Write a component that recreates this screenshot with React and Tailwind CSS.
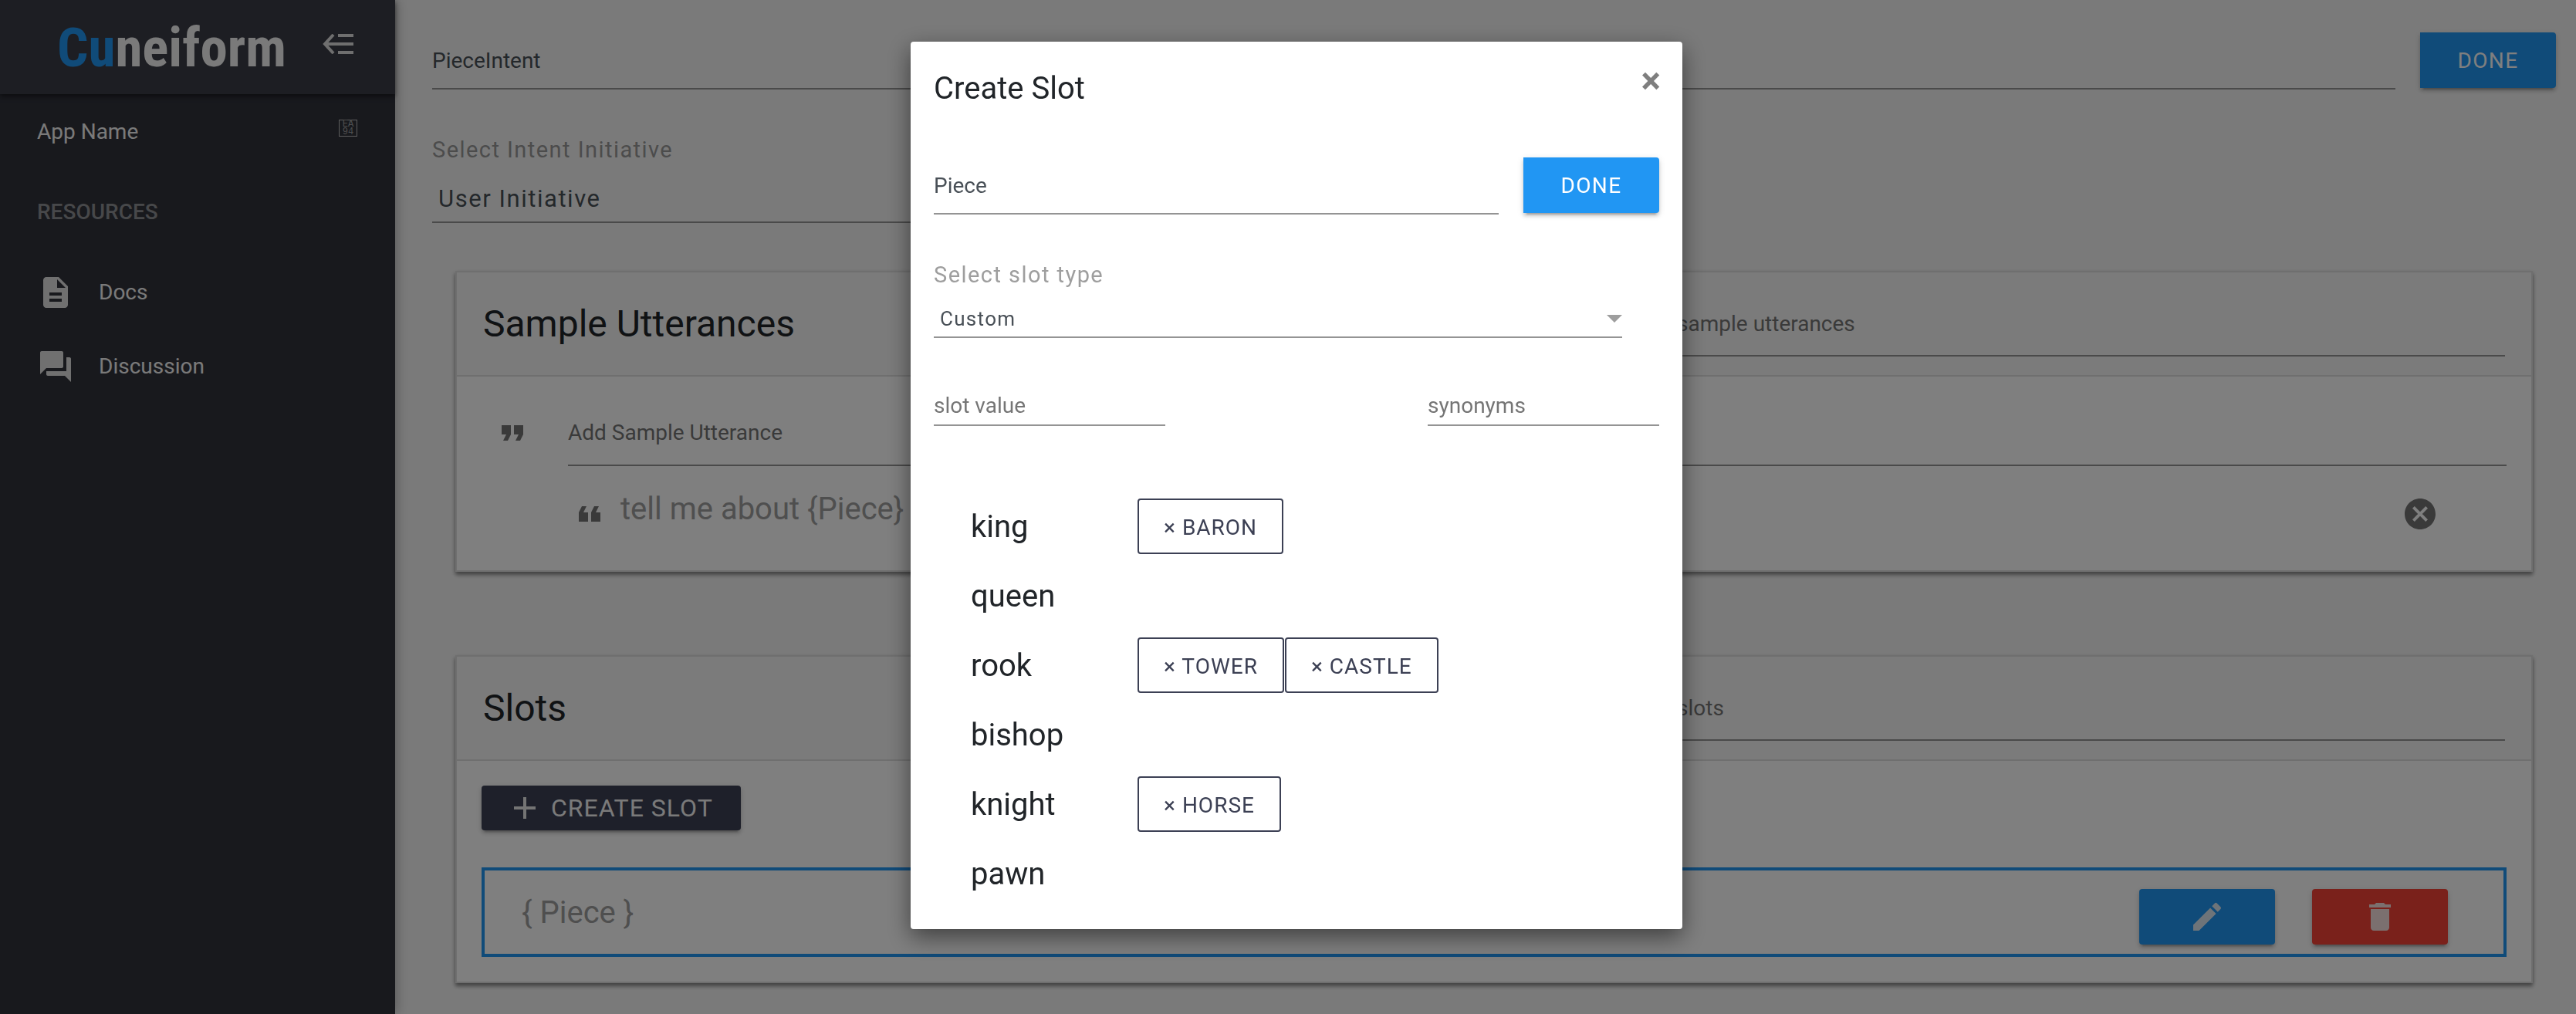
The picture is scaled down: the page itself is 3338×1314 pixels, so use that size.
import React from "react";
import {
  MdAdd,
  MdCancel,
  MdDelete,
  MdDescription,
  MdEdit,
  MdFormatQuote,
  MdQuestionAnswer,
} from "react-icons/md";

const raised =
  "shadow-[0_6px_2px_-4px_rgba(0,0,0,0.2),0_4px_4px_rgba(0,0,0,0.14),0_2px_10px_rgba(0,0,0,0.12)]";
const line = "border-b-2 border-[#949494] bg-transparent outline-none";

const slotValues = [
  { value: "king", synonyms: ["baron"] },
  { value: "queen", synonyms: [] },
  { value: "rook", synonyms: ["tower", "castle"] },
  { value: "bishop", synonyms: [] },
  { value: "knight", synonyms: ["horse"] },
  { value: "pawn", synonyms: [] },
];

function DoneButton() {
  return (
    <button
      type="button"
      className={`h-[72px] w-44 shrink-0 rounded-r bg-[#2196f3] pt-0.5 text-[28px] tracking-wider text-white ${raised}`}
    >
      DONE
    </button>
  );
}

function Sidebar() {
  return (
    <aside className="z-10 w-[512px] shrink-0 bg-[#30323b] text-[28px] text-[#f5f5f5] shadow-[0_0_16px_rgba(0,0,0,0.35)]">
      <header className="flex h-[122px] items-center justify-between bg-[#3b3d46] pr-[54px] pl-[74px] shadow-[0_3px_6px_rgba(0,0,0,0.5)]">
        <h1 className="font-['Roboto_Condensed','Roboto',sans-serif] text-[71px] leading-none font-bold">
          <span className="text-[#2196f3]">Cu</span>neiform
        </h1>
        <button type="button" aria-label="Collapse menu" className="pb-2">
          <svg width="40" height="26" viewBox="0 0 40 26" fill="none" stroke="#dedede" strokeWidth="4">
            <path d="M20 2H40M4 13H40M20 24H40M14 1L3 13L14 25" />
          </svg>
        </button>
      </header>
      <div className="mt-[29px] flex items-start justify-between pr-[49px] pl-12 leading-10">
        <span>App Name</span>
        <span
          aria-hidden="true"
          className="mt-1 flex w-6 flex-col items-center border border-[#bdbdbd] font-['Liberation_Mono',monospace] text-[12px] leading-[10px] text-[#9e9e9e]"
        >
          <span>EA</span>
          <span>94</span>
        </span>
      </div>
      <h2 className="mt-16 pl-12 leading-10 font-medium text-[#8f9094]">RESOURCES</h2>
      <nav className="mt-[60px] flex flex-col gap-12 pl-12">
        <a href="#docs" className="flex h-12 items-center gap-8">
          <MdDescription size={48} color="#e0e0e0" />
          Docs
        </a>
        <a href="#discussion" className="flex h-12 items-center gap-8">
          <MdQuestionAnswer size={48} color="#e0e0e0" />
          Discussion
        </a>
      </nav>
    </aside>
  );
}

function Card({ title, placeholder, children }) {
  return (
    <section className="mx-[30px] border-2 border-[#dfdfdf] bg-white shadow-[0_4px_5px_rgba(0,0,0,0.4),0_2px_6px_rgba(0,0,0,0.12)]">
      <header className="flex h-[135px] items-center justify-between border-b-2 border-[#dfdfdf] bg-[#f7f7f7] px-[34px]">
        <h2 className="text-[48px] text-[#212529]">{title}</h2>
        <input
          type="text"
          aria-label={placeholder}
          placeholder={placeholder}
          className={`h-[84px] w-[44.5%] pt-0.5 text-[28px] placeholder:text-[#757575] ${line}`}
        />
      </header>
      <div className="px-8">{children}</div>
    </section>
  );
}

function Intent() {
  return (
    <main className="min-w-0 grow pt-[42px] pr-[26px] pl-12">
      <div className="flex items-start gap-8">
        <input
          type="text"
          aria-label="Intent name"
          defaultValue="PieceIntent"
          className={`h-[74px] grow text-[28px] text-[#495057] ${line}`}
        />
        <DoneButton />
      </div>
      <div className="mt-[58px] mb-[62px] w-[45%]">
        <label htmlFor="initiative" className="block text-[29px] leading-10 tracking-wider text-[#999999]">
          Select Intent Initiative
        </label>
        <select
          id="initiative"
          className={`mt-[13px] block h-[62px] w-full appearance-none pt-0.5 pl-2 text-[31px] tracking-wider text-[#495057] ${line}`}
        >
          <option>User Initiative</option>
        </select>
      </div>

      <Card title="Sample Utterances" placeholder="Search sample utterances">
        <div className="flex items-center gap-12 pt-[30px] pl-4">
          <MdFormatQuote size={48} color="#757575" />
          <input
            type="text"
            aria-label="Add Sample Utterance"
            placeholder="Add Sample Utterance"
            className={`h-[86px] grow text-[28px] placeholder:text-[#757575] ${line}`}
          />
        </div>
        <div className="mt-[26px] flex items-end gap-4 pr-[88px] pb-[49px] pl-[116px]">
          <MdFormatQuote size={48} color="#757575" className="rotate-180" />
          <p className="grow text-[40px] leading-[60px] text-[#9e9e9e]">{"tell me about {Piece}"}</p>
          <button type="button" aria-label="Remove utterance">
            <MdCancel size={48} color="#757575" />
          </button>
        </div>
      </Card>

      <div className="h-[108px]" />

      <Card title="Slots" placeholder="Search slots">
        <div className="py-8">
          <button
            type="button"
            className={`flex h-[58px] items-center gap-[10px] rounded bg-[#3c4054] pr-9 pl-8 text-[32px] tracking-[1px] text-[#f5f5f5] ${raised}`}
          >
            <MdAdd size={48} color="#e8e8e8" />
            CREATE SLOT
          </button>
          <div className="mt-12 flex h-[116px] items-center justify-between border-4 border-[#2196f3] pr-[72px] pl-12">
            <p className="pt-0.5 text-[40px] text-[#9e9e9e]">{"{ Piece }"}</p>
            <div className="mt-3 flex gap-12">
              <button
                type="button"
                aria-label="Edit slot"
                className={`flex h-[72px] w-44 items-center justify-center rounded bg-[#2196f3] ${raised}`}
              >
                <MdEdit size={48} color="#dde9f2" />
              </button>
              <button
                type="button"
                aria-label="Delete slot"
                className={`flex h-[72px] w-44 items-center justify-center rounded bg-[#f44336] ${raised}`}
              >
                <MdDelete size={48} color="#f7e0de" />
              </button>
            </div>
          </div>
        </div>
      </Card>
    </main>
  );
}

function CreateSlotDialog() {
  return (
    <div className="fixed inset-0 z-20 flex items-start justify-center overflow-auto bg-black/50 pt-[54px] pl-[22px]">
      <div
        role="dialog"
        aria-modal="true"
        aria-labelledby="dialog-title"
        className="w-[1000px] rounded bg-white px-[30px] pt-[37px] pb-9 shadow-[0_10px_30px_rgba(0,0,0,0.5)]"
      >
        <div className="flex items-start justify-between">
          <h2 id="dialog-title" className="text-[40px] leading-[48px] text-[#212529]">
            Create Slot
          </h2>
          <button type="button" aria-label="Close" className="-mr-0.5 text-[48px] leading-[28px] font-bold text-[#7f7f7f]">
            ×
          </button>
        </div>
        <div className="mt-[65px] flex items-start gap-8">
          <input
            type="text"
            aria-label="Slot name"
            defaultValue="Piece"
            className={`h-[74px] grow text-[28px] text-[#495057] ${line}`}
          />
          <DoneButton />
        </div>
        <div className="mt-[58px] mr-12">
          <label htmlFor="slot-type" className="block text-[29px] leading-10 tracking-wider text-[#9e9e9e]">
            Select slot type
          </label>
          <div className="relative mt-3">
            <select
              id="slot-type"
              className={`block h-[50px] w-full appearance-none pt-0.5 pl-2 text-[26px] tracking-wider text-[#495057] ${line}`}
            >
              <option>Custom</option>
            </select>
            <svg width="20" height="10" viewBox="0 0 20 10" fill="#9e9e9e" className="pointer-events-none absolute top-5 right-0">
              <path d="M0 0H20L10 10Z" />
            </svg>
          </div>
        </div>
        <div className="mt-[62px] flex justify-between">
          {["slot value", "synonyms"].map((name) => (
            <input
              key={name}
              type="text"
              aria-label={name}
              placeholder={name}
              className={`h-[52px] w-[300px] text-[28px] placeholder:text-[#757575] ${line}`}
            />
          ))}
        </div>
        <ul className="mt-[94px] flex flex-col gap-[18px] pl-12">
          {slotValues.map(({ value, synonyms }) => (
            <li key={value} className="flex h-[72px] items-center">
              <span className="w-[216px] pt-0.5 text-[40px] text-[#212529]">{value}</span>
              <div className="flex gap-px">
                {synonyms.map((synonym) => (
                  <button
                    key={synonym}
                    type="button"
                    className="h-[72px] rounded border-2 border-[#3c4054] px-8 pt-1 text-[28px] tracking-[1px] text-[#3c4054] uppercase"
                  >
                    × {synonym}
                  </button>
                ))}
              </div>
            </li>
          ))}
        </ul>
      </div>
    </div>
  );
}

export default function App() {
  return (
    <div className="flex min-h-screen bg-[#f5f5f5] font-['Roboto',sans-serif]">
      <Sidebar />
      <Intent />
      <CreateSlotDialog />
    </div>
  );
}
